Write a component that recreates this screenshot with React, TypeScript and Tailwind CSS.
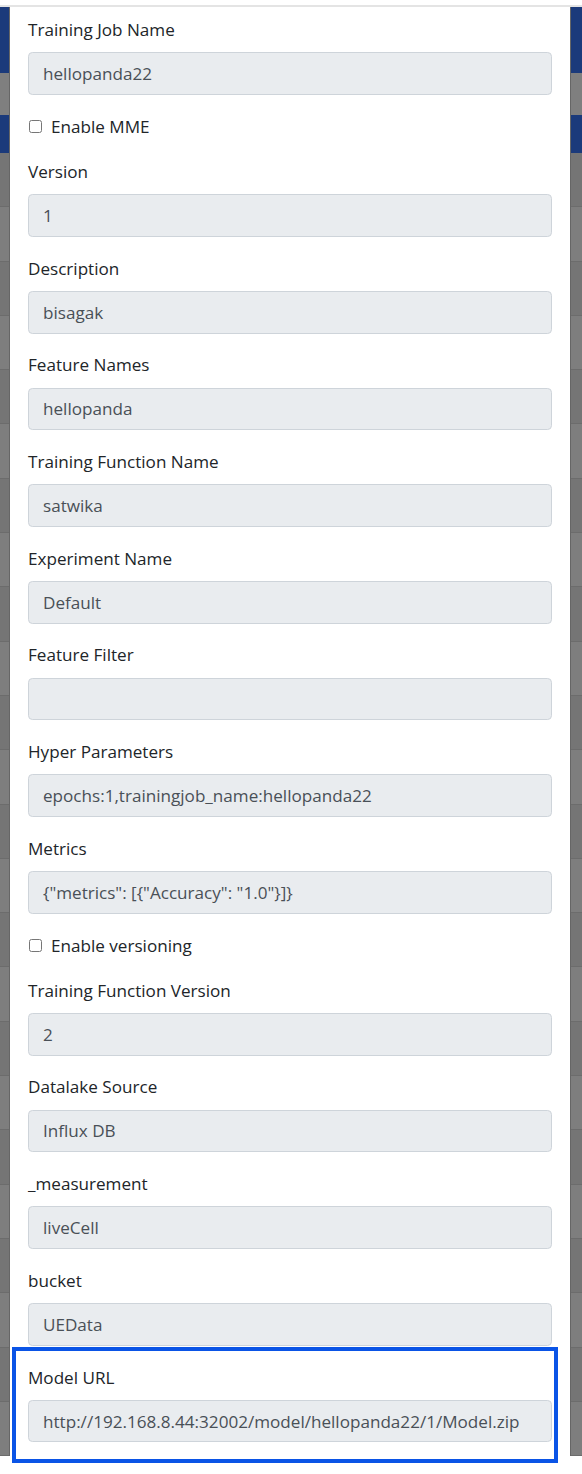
import React from 'react';

const fields: { label: string; value: string; checkboxAfter?: string }[] = [
  { label: 'Training Job Name', value: 'hellopanda22', checkboxAfter: 'Enable MME' },
  { label: 'Version', value: '1' },
  { label: 'Description', value: 'bisagak' },
  { label: 'Feature Names', value: 'hellopanda' },
  { label: 'Training Function Name', value: 'satwika' },
  { label: 'Experiment Name', value: 'Default' },
  { label: 'Feature Filter', value: '' },
  { label: 'Hyper Parameters', value: 'epochs:1,trainingjob_name:hellopanda22' },
  { label: 'Metrics', value: '{"metrics": [{"Accuracy": "1.0"}]}', checkboxAfter: 'Enable versioning' },
  { label: 'Training Function Version', value: '2' },
  { label: 'Datalake Source', value: 'Influx DB' },
  { label: '_measurement', value: 'liveCell' },
  { label: 'bucket', value: 'UEData' },
];

const rows = Array.from({ length: 24 });

function Backdrop({ edge }: { edge: 'left' | 'right' }) {
  return (
    <div className={`flex w-full flex-col ${edge === 'left' ? 'border-r border-[#666]' : 'border-l border-[#666]'}`}>
      <div className="h-[66px] bg-[#1b3a7b]" />
      <div className="h-[42px] bg-[#7f7f7f]" />
      <div className="h-[38px] bg-[#1b3a7b]" />
      {rows.map((_, i) => (
        <div
          key={i}
          className={`h-[54.3px] border-b border-[#6c6c6c] ${i % 2 === 0 ? 'bg-[#757575]' : 'bg-[#7e7e7e]'}`}
        />
      ))}
    </div>
  );
}

function Field({ label, value }: { label: string; value: string }) {
  return (
    <>
      <label className="mb-[8.8px] block leading-[26.4px] text-[#212529]">{label}</label>
      <input
        readOnly
        value={value}
        className="block h-[42.7px] w-full rounded-[4.4px] border border-[#ced4da] bg-[#e9ecef] px-[14px] text-[17.1px] text-[#495057] outline-none"
        style={{ fontFamily: 'inherit' }}
      />
    </>
  );
}

export default function App() {
  return (
    <div
      className="h-[1474px] w-[582px] overflow-hidden bg-white text-[17.1px]"
      style={{ fontFamily: '"Open Sans", "Noto Sans", sans-serif' }}
    >
      <div className="h-[7px] border-b-2 border-[#e4e4e4] bg-white" />
      <div className="flex">
        <div className="w-[10px] shrink-0">
          <Backdrop edge="left" />
        </div>

        {/* Modal body */}
        <div className="w-[560px] shrink-0 bg-white px-[18px] pt-[10px]">
          {fields.map((f) => (
            <div key={f.label}>
              <div className="mb-[18.8px]">
                <Field label={f.label} value={f.value} />
              </div>
              {f.checkboxAfter && (
                <div className="mb-[18.9px] flex h-[26.4px] items-center gap-[9px] pl-[1px] text-[#212529]">
                  <input type="checkbox" className="h-[13px] w-[13px]" />
                  <span>{f.checkboxAfter}</span>
                </div>
              )}
            </div>
          ))}

          {/* highlighted field (annotation box) */}
          <div className="mt-[-17.5px] ml-[-16px] mr-[-6px] border-4 border-[#0a54e6] pt-[13.5px] pr-[2px] pb-[16.6px] pl-[12px]">
            <Field label="Model URL" value="http://192.168.8.44:32002/model/hellopanda22/1/Model.zip" />
          </div>
        </div>

        <div className="w-[12px] shrink-0">
          <Backdrop edge="right" />
        </div>
      </div>
    </div>
  );
}
